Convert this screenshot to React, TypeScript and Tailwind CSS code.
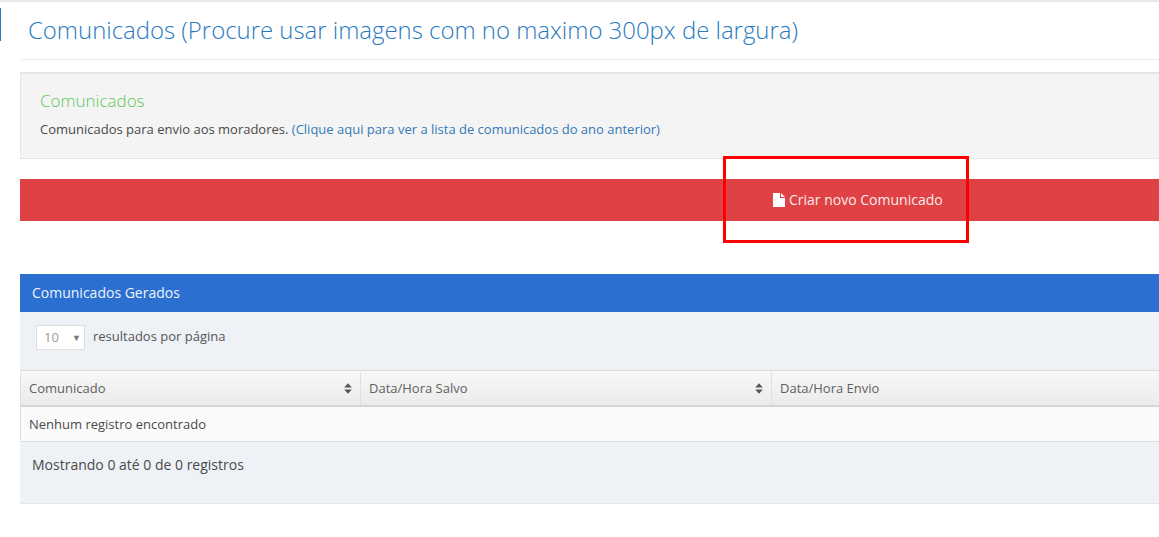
import React from "react";

function SortIcon() {
  return (
    <svg width="8" height="11" viewBox="0 0 8 11" className="shrink-0">
      <path d="M4 0.2 L7.8 4.6 H0.2 Z M4 10.8 L0.2 6.4 H7.8 Z" fill="#555" />
    </svg>
  );
}

function FileIcon() {
  return (
    <svg width="12" height="14" viewBox="0 0 12 14" className="shrink-0">
      <path d="M0 0 H7 V5 H12 V14 H0 Z M8 0 L12 4 H8 Z" fill="#fff" />
    </svg>
  );
}

export default function App() {
  return (
    <div className="relative h-[537px] w-[1159px] overflow-hidden bg-white font-['Open_Sans',sans-serif] text-[13px] text-[#4a4a4a]">
      <div className="h-0.5 bg-[#e8e8e8]" />
      <div className="relative pl-5 pt-1">
        <div className="absolute left-0 top-[6px] h-[33px] w-px bg-[#2b7bc4]" />
        <h1 className="h-[54px] border-b border-dotted border-[#ddd] pl-2 pt-[7px] text-[23.93px] leading-[33px] font-light text-[#2a7ac0]">
          Comunicados (Procure usar imagens com no maximo 300px de largura)
        </h1>

        <div className="mt-3 h-[87px] border-y-2 border-l border-t-[#e6e6e6] border-b-[#e6e6e6] border-l-[#e6e6e6] border-b-1 bg-[#f4f4f4] pl-[19px] pt-[16px]">
          <div className="text-[17px] leading-[22px] font-light text-[#5cc85c]">Comunicados</div>
          <p className="mt-[8px] text-[13px] leading-[18px] text-[#4a4a4a]">
            Comunicados para envio aos moradores.{" "}
            <a className="text-[#337ab7]">(Clique aqui para ver a lista de comunicados do ano anterior)</a>
          </p>
        </div>

        <div className="mt-5 flex h-[42px] items-center bg-[#e04145] pl-[753px] text-white">
          <FileIcon />
          <span className="ml-1 text-[14px] leading-5 text-[#fbeaea]">Criar novo Comunicado</span>
        </div>

        <div className="mt-[53px] flex h-[38px] items-center bg-[#2b6fd0] pb-[2px] pl-3 text-[14px] text-[#eef3fb]">
          Comunicados Gerados
        </div>

        <div className="h-[192px] border-b border-[#e3e6ea] bg-[#eef1f6]">
          <div className="flex h-[58px] items-start pl-4 pt-[13px]">
            <div className="flex h-[25px] w-[49px] items-center justify-between border border-[#ddd] bg-white pl-[7px] pr-[3px] text-[13px] text-[#999]">
              <span>10</span>
              <span className="text-[9px] text-[#777]">▼</span>
            </div>
            <span className="ml-2 text-[13px] leading-[22px] text-[#555]">resultados por página</span>
          </div>

          <div className="flex h-[37px] border-y-1 border-t-[#dcdcdc] border-b-[#d4d4d4] border-b-2 bg-gradient-to-b from-[#f8f8f8] to-[#ebebeb] pt-px text-[13px] font-medium text-[#606060]">
            <div className="flex w-[341px] items-center justify-between border-x border-[#e0e0e0] pl-2 pr-2">
              <span>Comunicado</span>
              <SortIcon />
            </div>
            <div className="flex w-[411px] items-center justify-between border-r border-[#e0e0e0] pl-2 pr-2">
              <span>Data/Hora Salvo</span>
              <SortIcon />
            </div>
            <div className="flex flex-1 items-center pl-2">
              <span>Data/Hora Envio</span>
            </div>
          </div>

          <div className="flex h-[35px] items-center border-b border-l border-[#dfdfdf] bg-[#fafafa] pl-2 pt-px text-[13px] text-[#4a4a4a]">
            Nenhum registro encontrado
          </div>

          <div className="pl-3 pt-[13px] text-[14px] leading-5 text-[#4a4a4a]">Mostrando 0 até 0 de 0 registros</div>
        </div>
      </div>

      <div className="absolute left-[723px] top-[156px] h-[87px] w-[246px] border-[3px] border-[#ff0000]" />
    </div>
  );
}
